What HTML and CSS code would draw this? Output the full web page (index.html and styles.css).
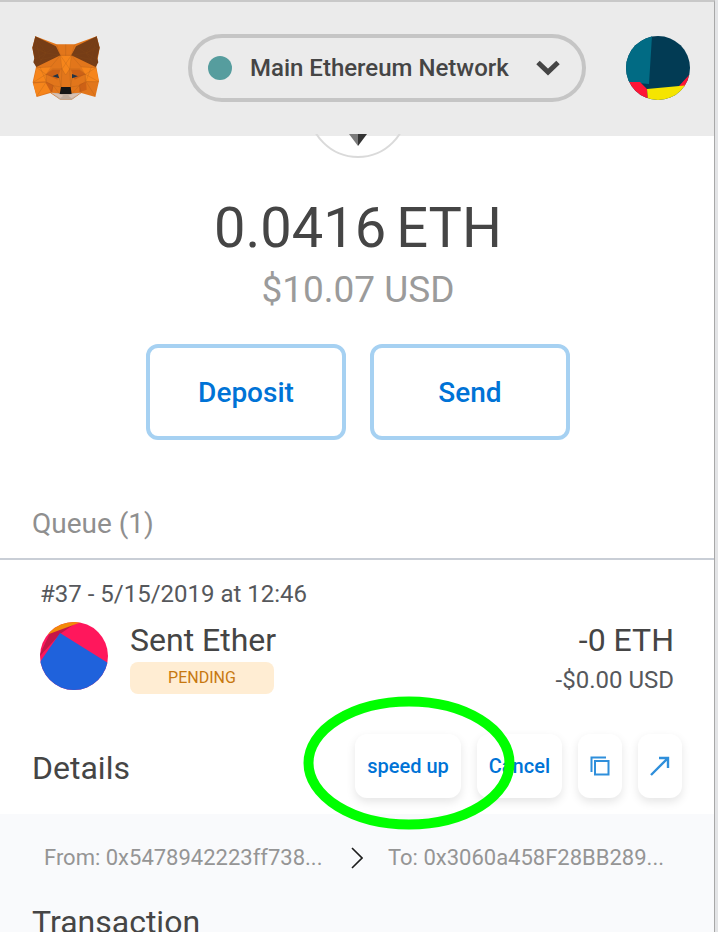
FILE: index.html
```
<!DOCTYPE html>
<html lang="en">
<head>
<meta charset="utf-8">
<title>MetaMask</title>
<link rel="stylesheet" href="styles.css">
</head>
<body>
<div class="popup">
  <header class="header">
    <svg class="fox" viewBox="36 33 204 192" aria-hidden="true">
      <path fill="#e2761b" d="M46 34 110 58H164L230 34 239 68 229 126 237 168 226 216 184 204 155 224H121L91 204 50 216 38 172 48 126 37 68Z"/>
      <path fill="#cd6116" d="M78 148 98 134H121L112 164ZM153 134H178L196 148 164 164ZM78 170 100 180 97 202 76 194ZM198 170 178 178 178 202 200 194Z"/>
      <path fill="#f6851b" d="M120 92H154L149 132 137 150 126 132ZM50 128 92 126 78 148 78 168 40 172ZM184 126 228 128 236 170 198 168 196 148ZM50 214 40 176 76 172 92 200Z"/>
      <path fill="#763d16" d="M46 34 108 64 121 91 49 126 40 112 43 100 37 68ZM230 34 168 64 154 91 227 126 235 112 232 100 239 68Z"/>
      <path fill="#c0ad9e" d="M94 203 121 205H154L182 203 155 224H121Z"/>
      <path fill="#d7c1b3" d="M94 203 120 208 130 212 121 220ZM182 203 154 208 145 212 155 220Z"/>
      <path fill="#233447" d="M97 154 113 147 118 160ZM156 147 174 154 156 160Z"/>
      <path fill="#161616" d="M123 186H152L155 207H119Z"/>
      <path fill="none" stroke="#8c4a1c" stroke-width="1" opacity=".6" d="M46 34 78 84 49 126M37 68 78 84 108 64M78 84 121 91M46 66 78 84 43 104M46 34 60 104 121 91M230 34 198 84 227 126M239 68 198 84 168 64M198 84 154 91M229 66 198 84 232 104M230 34 214 104 154 91M110 58 121 91H154L164 58M121 91 126 132 137 150 149 132 154 91M126 132H98L78 148 97 154M149 132H178L196 148 174 154M121 91 92 126 50 128M154 91 184 126 228 128M50 128 78 148 40 172H78L50 214M228 128 196 148 236 170H198L226 214M78 148V170L100 182 92 203M196 148V170L178 182 184 203M100 182 123 186 118 160M178 182 152 186 156 160M123 186 126 132M152 186 149 132M137 58V92M121 91 149 132M154 91 126 132M100 182 119 207M178 182 155 207M60 126 78 168M214 126 198 168"/>
    </svg>
    <button class="network" type="button">
      <span class="network-dot"></span>
      <span class="network-name">Main Ethereum Network</span>
      <svg class="network-arrow" viewBox="0 0 24 16" aria-hidden="true"><path d="M2 2.5 12 12 22 2.5" fill="none" stroke="#454545" stroke-width="5"/></svg>
    </button>
    <button class="account" type="button" aria-label="My account">
      <svg viewBox="0 0 64 64" aria-hidden="true">
        <rect width="64" height="64" fill="#023b54"/>
        <path fill="#016b84" d="M0 0H26L23 48 0 46Z"/>
        <path fill="#fe1535" d="M0 46H14L21 53 22 64H0ZM53 50 64 38V52Z"/>
        <path fill="#f5e500" d="M21 53 64 49V64H22Z"/>
      </svg>
    </button>
  </header>

  <main>
    <section class="balance">
      <svg class="token" viewBox="0 0 100 24" aria-hidden="true">
        <circle cx="50" cy="-26" r="49" fill="none" stroke="#dadada" stroke-width="2"/>
        <path fill="#7b7b7b" d="M41 0H50V12Z"/><path fill="#343434" d="M50 0H59L50 12Z"/>
      </svg>
      <div class="balance-main"><span>0.0416</span> <span>ETH</span></div>
      <div class="balance-fiat">$10.07 USD</div>
      <div class="actions">
        <button class="action" type="button">Deposit</button>
        <button class="action" type="button">Send</button>
      </div>
    </section>

    <section class="queue">
      <h2 class="queue-title">Queue (1)</h2>
      <article class="tx">
        <div class="tx-date">#37 - 5/15/2019 at 12:46</div>
        <div class="tx-row">
          <svg class="tx-icon" viewBox="0 0 68 68" aria-hidden="true">
            <rect width="68" height="68" fill="#ff175c"/>
            <path fill="#c41648" d="M0 32 10 11 36 1 20 12 0 34Z"/>
            <path fill="#f28a08" d="M0 0H42L36 2 9 12 0 14Z"/>
            <path fill="#1f62dc" d="M20 11 68 41V68H0V40Z"/>
          </svg>
          <div class="tx-info">
            <div class="tx-title">Sent Ether</div>
            <div class="badge">PENDING</div>
          </div>
          <div class="tx-amount">
            <div class="tx-title">-0 ETH</div>
            <div class="tx-fiat">-$0.00 USD</div>
          </div>
        </div>
      </article>
      <div class="details-bar">
        <h3 class="heading">Details</h3>
        <div class="tools">
          <button class="tool" type="button">speed up</button>
          <button class="tool" type="button">Cancel</button>
          <button class="tool tool-icon" type="button" aria-label="Copy transaction ID">
            <svg viewBox="0 0 20 20" aria-hidden="true"><path d="M16 1.5H1.5V16M5 5H18.5V18.5H5Z" fill="none" stroke="#2f8fdb" stroke-width="2"/></svg>
          </button>
          <button class="tool tool-icon" type="button" aria-label="View on Etherscan">
            <svg viewBox="0 0 20 20" aria-hidden="true"><path d="M1 19 18 2M9 2H18V12" fill="none" stroke="#2f8fdb" stroke-width="2.4"/></svg>
          </button>
          <svg class="ring" viewBox="0 0 212 134" aria-hidden="true"><ellipse cx="106" cy="67" rx="100.5" ry="61.5" fill="none" stroke="#00ff00" stroke-width="10"/></svg>
        </div>
      </div>
      <div class="details">
        <div class="route">
          <span>From: 0x5478942223ff738...</span>
          <svg class="route-arrow" viewBox="0 0 12 22" aria-hidden="true"><path d="M1 1 11 11 1 21" fill="none" stroke="#1d1d1d" stroke-width="1.6"/></svg>
          <span>To: 0x3060a458F28BB289...</span>
        </div>
        <h3 class="heading">Transaction</h3>
      </div>
    </section>
  </main>
</div>
</body>
</html>
```
FILE: styles.css
```
* { box-sizing: border-box; }

body {
  margin: 0;
  height: 100vh;
  overflow: hidden;
  background: #e3e4e6;
  font-family: Roboto, "Liberation Sans", sans-serif;
  color: #454545;
}

button { font-family: inherit; cursor: pointer; }
h2, h3 { margin: 0; font-weight: 400; }
svg { display: block; }

.popup {
  margin-right: 3px;
  min-height: 100vh;
  background: #fff;
  border-top: 2px solid #c8c8c8;
  border-right: 1px solid #a8a8a8;
}

.header {
  display: flex;
  align-items: center;
  height: 134px;
  padding: 0 24px 2px 32px;
  background: #ebebeb;
}

.fox { width: 68px; height: 64px; }

.network {
  display: flex;
  flex: 1;
  align-items: center;
  height: 68px;
  margin: 0 40px 0 88px;
  padding: 0 22px 0 16px;
  border: 4px solid #c5c5c5;
  border-radius: 34px;
  background: none;
  color: inherit;
}

.network-dot {
  width: 24px;
  height: 24px;
  border-radius: 50%;
  background: #569d9e;
}

.network-name {
  flex: 1;
  padding-left: 18px;
  font-size: 24px;
  font-weight: 500;
  line-height: 28px;
  text-align: left;
  white-space: nowrap;
}

.network-arrow { width: 24px; height: 16px; }

.account {
  width: 64px;
  height: 64px;
  padding: 0;
  border: 0;
  border-radius: 50%;
  overflow: hidden;
}

.balance {
  display: flex;
  flex-direction: column;
  align-items: center;
  padding-left: 2px;
}

.token { width: 100px; height: 24px; margin-top: -2px; }

.balance-main {
  display: flex;
  gap: 10px;
  margin-top: 38px;
  font-size: 56px;
  line-height: 64px;
}

.balance-fiat {
  margin-top: 6px;
  font-size: 37px;
  line-height: 48px;
  color: #9b9b9b;
}

.actions { display: flex; gap: 24px; margin-top: 30px; }

.action {
  width: 200px;
  height: 96px;
  border: 4px solid #a6d1f2;
  border-radius: 12px;
  background: #fff;
  color: #0073d6;
  font-size: 28px;
  font-weight: 500;
}

.queue-title {
  margin-top: 64px;
  padding: 0 32px 14px;
  border-bottom: 2px solid #c9ced6;
  font-size: 28px;
  line-height: 40px;
  color: #8f8f8f;
}

.tx { padding: 20px 40px 36px; }

.tx-date { font-size: 24px; line-height: 28px; color: #56585c; }

.tx-row { display: flex; margin-top: 10px; }

.tx-icon { width: 68px; height: 68px; margin-top: 4px; border-radius: 50%; }

.tx-info { flex: 1; margin-left: 22px; }

.tx-title { font-size: 32px; line-height: 44px; }

.badge {
  width: 144px;
  border-radius: 8px;
  background: #ffedd3;
  color: #c7780f;
  font-size: 16px;
  line-height: 32px;
  text-align: center;
}

.tx-amount { text-align: right; }

.tx-fiat { font-size: 24px; line-height: 36px; color: #56585c; }

.details-bar {
  display: flex;
  align-items: center;
  justify-content: space-between;
  padding: 0 32px 16px;
}

.heading { font-size: 32px; line-height: 40px; }

.details-bar .heading { padding-top: 4px; }

.tools { position: relative; display: flex; gap: 16px; }

.tool {
  height: 64px;
  padding: 0 12px;
  border: 0;
  border-radius: 12px;
  background: #fff;
  box-shadow: 0 4px 10px rgba(0, 0, 0, 0.1);
  color: #0073d6;
  font-size: 20px;
  font-weight: 500;
}

.tool-icon { width: 44px; }
.tool-icon svg { width: 20px; height: 20px; }

.ring {
  position: absolute;
  left: -52px;
  top: -38px;
  width: 212px;
  height: 134px;
  pointer-events: none;
}

.details { padding-top: 30px; background: #f9fafc; }

.route {
  display: flex;
  align-items: center;
  justify-content: space-between;
  padding: 0 50px 0 44px;
  font-size: 22px;
  line-height: 28px;
  color: #959595;
}

.route-arrow { width: 12px; height: 22px; margin-left: 4px; }

.details .heading { padding: 30px 32px; }
```
